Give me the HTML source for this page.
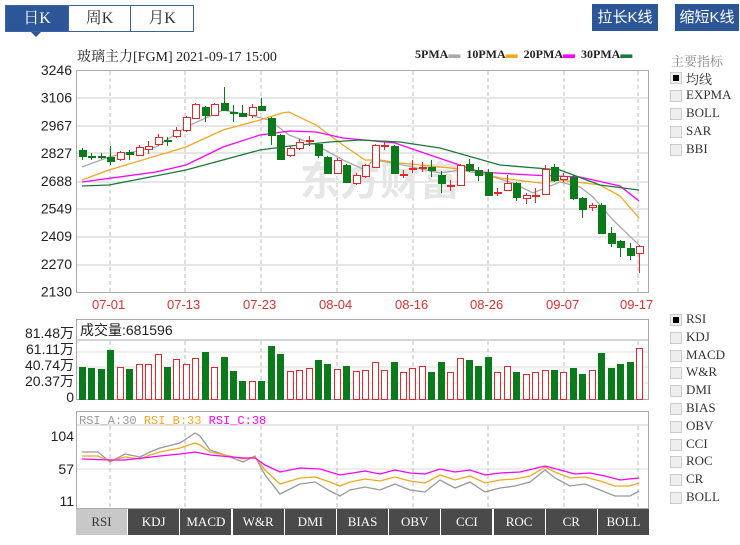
<!DOCTYPE html>
<html><head><meta charset="utf-8"><style>
body{margin:0;width:740px;height:545px;background:#fff;font-family:"Liberation Serif","Noto Serif CJK SC",serif;position:relative;overflow:hidden}
.a{position:absolute;white-space:nowrap}
.tab{position:absolute;top:5px;height:27px;border:1px solid #3a62a8;box-sizing:border-box;font-size:16px;line-height:25px;text-align:center;color:#333}
.btn{position:absolute;top:4px;height:27px;background:#2d5699;color:#fff;font-size:15px;line-height:27px;text-align:center;font-family:"Liberation Sans","Noto Sans CJK SC",sans-serif}
.cb{position:absolute;width:10px;height:10px;background:#eee;border:1px solid #ccc;left:670px}
.lb{position:absolute;left:686px;font-size:13px;color:#333}
.bt{position:absolute;top:509px;height:26px;width:51px;background:#4a4a4a;color:#fff;font-size:13px;line-height:26px;text-align:center}
</style></head><body>
<div class="tab" style="left:5px;width:64px;background:#2d5699;color:#fff">日K</div>
<div class="tab" style="left:68px;width:63px">周K</div>
<div class="tab" style="left:130px;width:64px">月K</div>
<div class="a" style="left:31px;top:32px;width:0;height:0;border-left:5px solid transparent;border-right:5px solid transparent;border-top:5px solid #2d5699"></div>
<div class="btn" style="left:592px;width:66px">拉长K线</div>
<div class="btn" style="left:675px;width:64px">缩短K线</div>
<div class="a" style="left:77px;top:46px;font-size:14px;color:#222">玻璃主力[FGM] 2021-09-17 15:00</div>
<div class="a" style="left:415px;top:47px;font-size:12px;color:#222;font-weight:bold">5PMA<span style="color:#aaa">▬</span>&nbsp;&nbsp;10PMA<span style="color:#f0a820">▬</span>&nbsp;&nbsp;20PMA<span style="color:#f0f">▬</span>&nbsp;&nbsp;30PMA<span style="color:#1a7a3a">▬</span></div>
<div class="a" style="left:671px;top:51px;font-size:13px;color:#888">主要指标</div>
<svg class="a" style="left:0;top:0" width="740" height="545" id="s"></svg>
<div id="r"></div>
<script>
var s=document.getElementById('s'),h='';
function L(x1,y1,x2,y2,c,d){h+='<line x1="'+x1+'" y1="'+y1+'" x2="'+x2+'" y2="'+y2+'" stroke="'+c+'"'+(d?' stroke-dasharray="4,3"':'')+'/>';}
function T(x,y,t,c,sz,a){h+='<text x="'+x+'" y="'+y+'" fill="'+c+'" font-size="'+sz+'" font-family="Liberation Sans,Noto Sans CJK SC,sans-serif"'+(a?' text-anchor="end"':'')+'>'+t+'</text>';}
var vx=[110,185,261,337,413,488,564,638];
h+='<rect x="76.5" y="70.5" width="572" height="222" fill="#fff" stroke="#aaa"/>';
[98,126,153,182,209,237,265].forEach(y=>L(77,y,648,y,'#ccc'));
vx.forEach(x=>L(x,71,x,292,'#bbb',1));
h+='<text x="380" y="195" font-size="40" fill="#e6e6e6" font-family="Noto Sans CJK SC" font-weight="bold" text-anchor="middle">东方财富</text>';
var pl=['3246','3106','2967','2827','2688','2549','2409','2270','2130'];
pl.forEach((t,i)=>T(72,75+i*27.7,t,'#222',14,1));
['07-01','07-13','07-23','08-04','08-16','08-26','09-07','09-17'].forEach((t,i)=>T(vx[i]-18,309,t,'#e03030',13));
function P(pts,c){h+='<polyline fill="none" stroke="'+c+'" stroke-width="1.3" points="'+pts+'"/>';}
P('82,167 109,157 156,147 186,127 223,110 249,115 269,120 289,135 316,145 343,160 365,170 373,160 387,162 403,165 440,173 460,170 487,175 513,183 533,193 545,188 560,182 580,187 593,197 613,220 639,245','#aaa');
P('82,180 109,170 186,147 223,130 260,120 282,113 289,112 316,125 343,145 365,160 380,160 400,163 440,167 470,170 500,178 540,183 560,180 600,185 620,196 639,218','#f0a820');
P('82,182 156,172 186,165 223,147 260,135 290,131 316,132 343,138 365,140 395,143 430,155 480,172 530,175 580,177 620,186 639,201','#f0f');
P('82,186 109,185 186,170 260,150 290,146 330,142 360,140 400,142 440,148 500,165 560,170 600,185 639,190','#1a7a3a');
var C=[['g',150,156,148,160],['g',156,157,153,160],['g',156,157,153,159],['g',157,161,146,165],['r',152,159,151,161],['g',152,154,150,160],['r',147,155,145,156],['r',146,149,141,154],['r',137,144,134,146],['g',140,141,137,146],['r',130,136,127,138],['r',117,130,116,132],['r',104,118,103,119],['g',107,115,106,122],['r',104,115,103,116],['g',103,110,87,111],['g',112,113,105,122],['g',113,116,105,117],['r',107,115,104,118],['g',106,110,98,111],['g',118,135,117,145],['g',135,159,134,160],['r',148,155,146,157],['r',142,148,139,150],['r',140,141,136,146],['g',144,155,143,158],['g',157,173,156,174],['r',160,173,158,174],['g',165,182,164,183],['r',175,183,173,185],['r',165,176,164,178],['r',145,167,144,168],['r',145,146,141,150],['g',146,173,145,174],['r',174,175,170,178],['r',168,169,160,173],['r',167,168,162,172],['g',167,170,160,177],['g',175,183,171,193],['r',185,186,180,191],['r',165,185,164,186],['g',164,170,159,172],['g',170,175,167,181],['g',172,195,169,196],['r',192,193,188,196],['r',183,190,175,191],['g',183,197,182,201],['r',195,198,193,204],['r',195,196,188,203],['r',169,194,165,195],['g',167,180,164,182],['r',176,179,173,182],['g',177,198,175,200],['g',198,209,197,218],['r',205,207,203,211],['g',205,233,203,234],['g',233,243,227,247],['g',241,247,240,257],['g',248,255,243,260],['r',246,253,245,273]];
var vol=[367,368,369,350,367,369,364,364,354,367,359,364,358,352,367,357,371,381,381,381,346,354,371,370,368,360,364,369,366,371,370,362,370,362,372,368,366,372,362,372,358,360,366,357,372,366,372,374,372,370,370,372,368,374,370,353,368,364,362,348];
h+='<rect x="76.5" y="319.5" width="572" height="80" fill="#fff" stroke="#aaa"/>';
L(77,340,648,340,'#aaa');
[352,367,383].forEach(y=>L(77,y,648,y,'#ddd'));
vx.forEach(x=>L(x,341,x,399,'#bbb',1));
[['81.48万',338],['61.11万',354],['40.74万',370],['20.37万',386],['0',402]].forEach(a=>T(74,a[1],a[0],'#222',14,1));
T(80,335,'成交量:681596','#222',14);
h+='<rect x="76.5" y="411.5" width="572" height="97" fill="#fff" stroke="#aaa"/>';
L(77,425,648,425,'#ccc');L(77,469,648,469,'#ddd');
vx.forEach(x=>L(x,426,x,508,'#bbb',1));
[['104',441],['57',474],['11',506]].forEach(a=>T(74,a[1],a[0],'#222',14,1));
h+='<text x="79" y="424" font-size="12" font-family="Liberation Mono,monospace"><tspan fill="#999">RSI_A:30 </tspan><tspan fill="#f0a820">RSI_B:33 </tspan><tspan fill="#f0f">RSI_C:38</tspan></text>';
P('82,452 98,452 110,462 125,454 140,457 150,452 160,448 180,443 195,433 200,436 210,450 225,455 243,462 255,456 265,475 280,494 300,484 315,482 330,491 340,496 350,490 365,487 380,490 395,484 410,490 425,492 440,480 455,488 470,482 485,492 500,488 515,486 530,482 545,470 555,478 570,486 585,484 600,490 615,496 630,496 639,491','#999');
P('82,456 98,456 110,461 125,457 140,459 150,455 160,452 180,448 195,443 200,445 210,452 225,455 243,459 255,457 265,470 280,484 300,478 315,477 330,482 340,486 350,482 365,479 380,481 395,477 410,481 425,483 440,475 455,480 470,476 485,483 500,480 515,479 530,476 545,467 555,472 570,478 585,477 600,481 615,486 630,486 639,483','#f0a820');
P('82,459 110,460 125,460 160,456 180,454 195,452 210,455 243,458 255,458 265,465 280,472 300,468 320,469 340,475 365,471 380,474 395,470 410,473 425,474 440,469 455,472 470,470 485,475 500,473 520,472 545,466 560,470 575,474 590,473 605,476 620,480 639,478','#f0f');
C.forEach((c,i)=>{var x=Math.round(82+i*9.44),col=c[0]=='g'?'#0a7a1a':'#e8262a';
 L(x+.5,c[3],x+.5,c[4],col);
 var bh=Math.max(1,c[2]-c[1]);
 h+='<rect x="'+(x-3)+'.5" y="'+c[1]+'.5" width="7" height="'+bh+'" fill="'+(c[0]=='g'?col:'#fff')+'" stroke="'+col+'"/>';
 var vt=vol[i];h+='<rect x="'+(x-3)+'.5" y="'+vt+'.5" width="6" height="'+(399-vt)+'" fill="'+(c[0]=='g'?col:'#fff')+'" stroke="'+col+'"/>';
});
s.innerHTML=h;
var r='',tp=['均线','EXPMA','BOLL','SAR','BBI'];
tp.forEach((t,i)=>{var y=69+i*18;r+='<div class="cb" style="top:'+(y+3)+'px">'+(i==0?'<div style="position:absolute;left:2px;top:2px;width:6px;height:6px;background:#000"></div>':'')+'</div><div class="lb" style="top:'+y+'px">'+t+'</div>';});
var bot=['RSI','KDJ','MACD','W&amp;R','DMI','BIAS','OBV','CCI','ROC','CR','BOLL'];
bot.forEach((t,i)=>{var y=311+i*17.8;r+='<div class="cb" style="top:'+(y+3)+'px">'+(i==0?'<div style="position:absolute;left:2px;top:2px;width:6px;height:6px;background:#000"></div>':'')+'</div><div class="lb" style="top:'+y+'px">'+t+'</div>';});
bot.forEach((t,i)=>{r+='<div class="bt" style="left:'+(76+i*52.2)+'px;'+(i==0?'background:#c8c8c8;color:#333':'')+'">'+t+'</div>';});
document.getElementById('r').innerHTML=r;
</script>
</body></html>
